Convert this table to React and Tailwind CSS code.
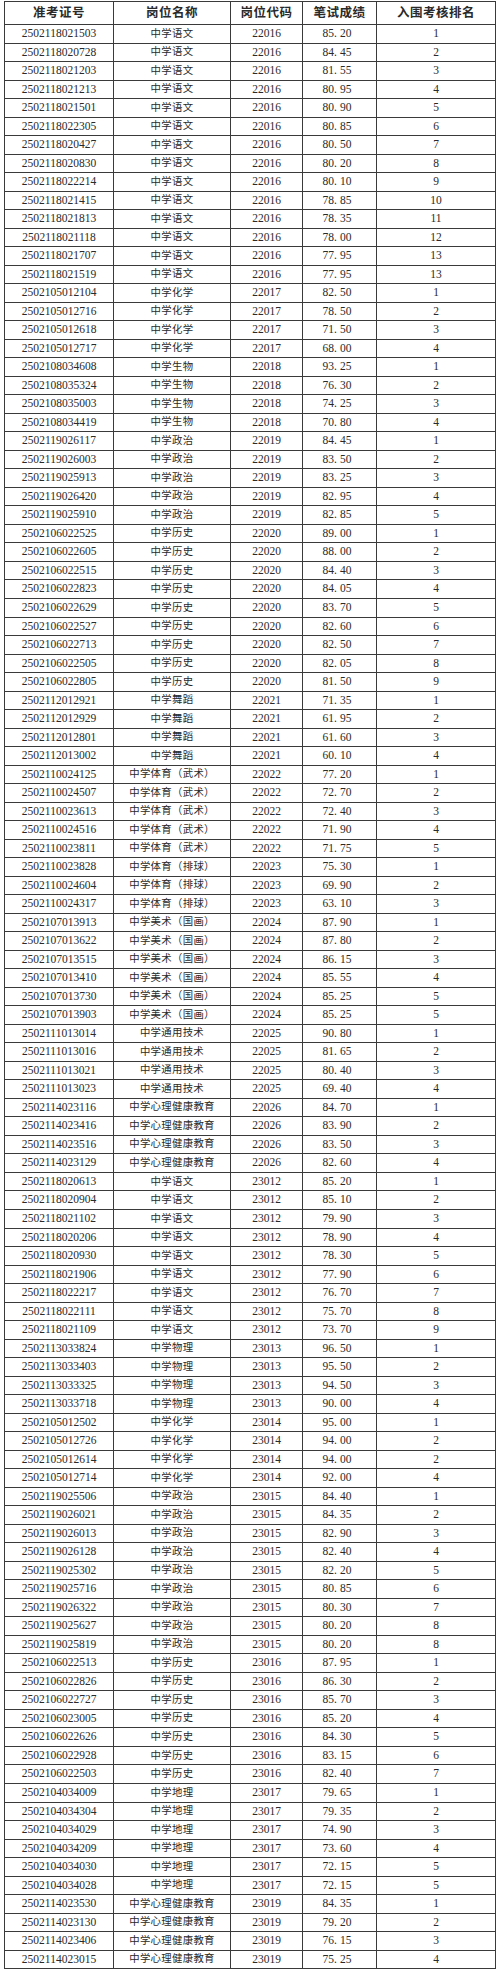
import React from "react";

// 准考证号 | 岗位名称 | 岗位代码 | 笔试成绩 | 入围考核排名
const groups = [
  ["中学语文", "22016", [
    ["2502118021503", "85.20", "1"], ["2502118020728", "84.45", "2"], ["2502118021203", "81.55", "3"],
    ["2502118021213", "80.95", "4"], ["2502118021501", "80.90", "5"], ["2502118022305", "80.85", "6"],
    ["2502118020427", "80.50", "7"], ["2502118020830", "80.20", "8"], ["2502118022214", "80.10", "9"],
    ["2502118021415", "78.85", "10"], ["2502118021813", "78.35", "11"], ["2502118021118", "78.00", "12"],
    ["2502118021707", "77.95", "13"], ["2502118021519", "77.95", "13"],
  ]],
  ["中学化学", "22017", [
    ["2502105012104", "82.50", "1"], ["2502105012716", "78.50", "2"], ["2502105012618", "71.50", "3"],
    ["2502105012717", "68.00", "4"],
  ]],
  ["中学生物", "22018", [
    ["2502108034608", "93.25", "1"], ["2502108035324", "76.30", "2"], ["2502108035003", "74.25", "3"],
    ["2502108034419", "70.80", "4"],
  ]],
  ["中学政治", "22019", [
    ["2502119026117", "84.45", "1"], ["2502119026003", "83.50", "2"], ["2502119025913", "83.25", "3"],
    ["2502119026420", "82.95", "4"], ["2502119025910", "82.85", "5"],
  ]],
  ["中学历史", "22020", [
    ["2502106022525", "89.00", "1"], ["2502106022605", "88.00", "2"], ["2502106022515", "84.40", "3"],
    ["2502106022823", "84.05", "4"], ["2502106022629", "83.70", "5"], ["2502106022527", "82.60", "6"],
    ["2502106022713", "82.50", "7"], ["2502106022505", "82.05", "8"], ["2502106022805", "81.50", "9"],
  ]],
  ["中学舞蹈", "22021", [
    ["2502112012921", "71.35", "1"], ["2502112012929", "61.95", "2"], ["2502112012801", "61.60", "3"],
    ["2502112013002", "60.10", "4"],
  ]],
  ["中学体育（武术）", "22022", [
    ["2502110024125", "77.20", "1"], ["2502110024507", "72.70", "2"], ["2502110023613", "72.40", "3"],
    ["2502110024516", "71.90", "4"], ["2502110023811", "71.75", "5"],
  ]],
  ["中学体育（排球）", "22023", [
    ["2502110023828", "75.30", "1"], ["2502110024604", "69.90", "2"], ["2502110024317", "63.10", "3"],
  ]],
  ["中学美术（国画）", "22024", [
    ["2502107013913", "87.90", "1"], ["2502107013622", "87.80", "2"], ["2502107013515", "86.15", "3"],
    ["2502107013410", "85.55", "4"], ["2502107013730", "85.25", "5"], ["2502107013903", "85.25", "5"],
  ]],
  ["中学通用技术", "22025", [
    ["2502111013014", "90.80", "1"], ["2502111013016", "81.65", "2"], ["2502111013021", "80.40", "3"],
    ["2502111013023", "69.40", "4"],
  ]],
  ["中学心理健康教育", "22026", [
    ["2502114023116", "84.70", "1"], ["2502114023416", "83.90", "2"], ["2502114023516", "83.50", "3"],
    ["2502114023129", "82.60", "4"],
  ]],
  ["中学语文", "23012", [
    ["2502118020613", "85.20", "1"], ["2502118020904", "85.10", "2"], ["2502118021102", "79.90", "3"],
    ["2502118020206", "78.90", "4"], ["2502118020930", "78.30", "5"], ["2502118021906", "77.90", "6"],
    ["2502118022217", "76.70", "7"], ["2502118022111", "75.70", "8"], ["2502118021109", "73.70", "9"],
  ]],
  ["中学物理", "23013", [
    ["2502113033824", "96.50", "1"], ["2502113033403", "95.50", "2"], ["2502113033325", "94.50", "3"],
    ["2502113033718", "90.00", "4"],
  ]],
  ["中学化学", "23014", [
    ["2502105012502", "95.00", "1"], ["2502105012726", "94.00", "2"], ["2502105012614", "94.00", "2"],
    ["2502105012714", "92.00", "4"],
  ]],
  ["中学政治", "23015", [
    ["2502119025506", "84.40", "1"], ["2502119026021", "84.35", "2"], ["2502119026013", "82.90", "3"],
    ["2502119026128", "82.40", "4"], ["2502119025302", "82.20", "5"], ["2502119025716", "80.85", "6"],
    ["2502119026322", "80.30", "7"], ["2502119025627", "80.20", "8"], ["2502119025819", "80.20", "8"],
  ]],
  ["中学历史", "23016", [
    ["2502106022513", "87.95", "1"], ["2502106022826", "86.30", "2"], ["2502106022727", "85.70", "3"],
    ["2502106023005", "85.20", "4"], ["2502106022626", "84.30", "5"], ["2502106022928", "83.15", "6"],
    ["2502106022503", "82.40", "7"],
  ]],
  ["中学地理", "23017", [
    ["2502104034009", "79.65", "1"], ["2502104034304", "79.35", "2"], ["2502104034029", "74.90", "3"],
    ["2502104034209", "73.60", "4"], ["2502104034030", "72.15", "5"], ["2502104034028", "72.15", "5"],
  ]],
  ["中学心理健康教育", "23019", [
    ["2502114023530", "84.35", "1"], ["2502114023130", "79.20", "2"], ["2502114023406", "76.15", "3"],
    ["2502114023015", "75.25", "4"],
  ]],
];

const rows = groups.flatMap(([name, code, list]) =>
  list.map(([id, score, rank]) => ({ id, name, code, score, rank }))
);

const headers = ["准考证号", "岗位名称", "岗位代码", "笔试成绩", "入围考核排名"];

// 成绩里的小数点占一个数字的宽度（宋体等宽数字）
const Score = ({ value }) => {
  const [a, b] = value.split(".");
  return (
    <span>
      {a}
      <span className="inline-block w-[6px] text-left">.</span>
      {b}
    </span>
  );
};

export default function App() {
  return (
    <div className="bg-white w-[500px] min-h-[1972px] pt-px pl-[4px] text-[#2a2a2a] font-['Liberation_Serif','Noto_Sans_CJK_SC',serif]">
      <table className="table-fixed border-collapse w-[491px] text-[11.5px] leading-none">
        <colgroup>
          <col className="w-[109px]" />
          <col className="w-[117px]" />
          <col className="w-[72px]" />
          <col className="w-[74px]" />
          <col className="w-[119px]" />
        </colgroup>
        <thead>
          <tr className="h-[23px]">
            {headers.map((h) => (
              <th key={h} className="border border-[#3a3a3a] text-center font-bold text-[12.5px] tracking-[0.5px] p-0">
                {h}
              </th>
            ))}
          </tr>
        </thead>
        <tbody>
          {rows.map((r, i) => (
            <tr key={i} className="h-[18.53px]">
              <td className="border border-[#3a3a3a] text-center p-0">{r.id}</td>
              <td className="border border-[#3a3a3a] text-center p-0 text-[10.4px] tracking-[0.3px]">{r.name}</td>
              <td className="border border-[#3a3a3a] text-center p-0">{r.code}</td>
              <td className="border border-[#3a3a3a] text-center p-0 pr-[5px]">
                <Score value={r.score} />
              </td>
              <td className="border border-[#3a3a3a] text-center p-0">{r.rank}</td>
            </tr>
          ))}
        </tbody>
      </table>
    </div>
  );
}
